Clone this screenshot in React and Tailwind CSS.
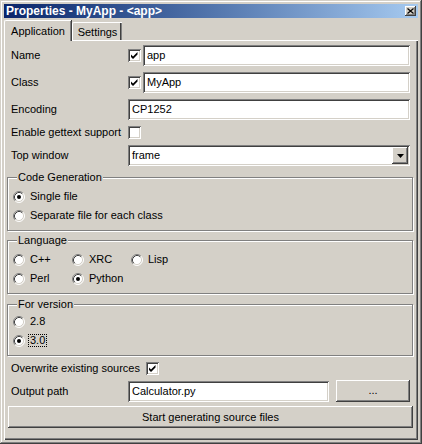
import React from "react";

const sunken =
  "shadow-[inset_1px_1px_#808080,inset_-1px_-1px_#ffffff,inset_2px_2px_#404040,inset_-2px_-2px_#d4d0c8]";
const raised =
  "shadow-[inset_-1px_-1px_#404040,inset_1px_1px_#ffffff,inset_-2px_-2px_#808080,inset_2px_2px_#d4d0c8]";
const etched = "border border-[#808080] shadow-[inset_1px_1px_#ffffff,1px_1px_#ffffff]";

function Check({ checked }) {
  return (
    <div className={`w-[13px] h-[13px] shrink-0 bg-white ${sunken}`}>
      {checked && (
        <svg width="13" height="13" viewBox="0 0 13 13" className="block">
          <path d="M3 5.5 L5 7.5 L9.5 3 L9.5 5.5 L5 10 L3 8 Z" fill="#000" />
        </svg>
      )}
    </div>
  );
}

function Radio({ checked }) {
  return (
    <svg width="12" height="12" viewBox="0 0 12 12" className="block shrink-0">
      <circle cx="6" cy="6" r="5" fill="#ffffff" />
      <path d="M2.11 9.89 A5.5 5.5 0 0 1 9.89 2.11" fill="none" stroke="#808080" strokeWidth="1" />
      <path d="M9.89 2.11 A5.5 5.5 0 0 1 2.11 9.89" fill="none" stroke="#ffffff" strokeWidth="1" />
      <path d="M2.82 9.18 A4.5 4.5 0 0 1 9.18 2.82" fill="none" stroke="#404040" strokeWidth="1" />
      <path d="M9.18 2.82 A4.5 4.5 0 0 1 2.82 9.18" fill="none" stroke="#d4d0c8" strokeWidth="1" />
      {checked && <circle cx="6" cy="6" r="2" fill="#000" />}
    </svg>
  );
}

function RadioItem({ checked, label, focus }) {
  return (
    <div className="flex items-center h-[19px]">
      <Radio checked={checked} />
      {focus ? (
        <span className="ml-[3px] px-px leading-[11px] border border-dotted border-black">{label}</span>
      ) : (
        <span className="ml-[5px]">{label}</span>
      )}
    </div>
  );
}

function Field({ children, className = "" }) {
  return (
    <div className={`h-[21px] bg-white flex items-center pl-[4px] ${sunken} ${className}`}>
      {children}
    </div>
  );
}

function Label({ children }) {
  return <div className="w-[121px] shrink-0 pl-[4px]">{children}</div>;
}

function Box({ title, className = "", children }) {
  return (
    <div className={`flex flex-col ${etched} ${className}`}>
      <div className="-mt-[7px] ml-[9px] px-px self-start bg-[#d4d0c8] leading-[13px]">{title}</div>
      {children}
    </div>
  );
}

export default function App() {
  return (
    <div className="w-[422px] h-[444px] bg-[#d4d0c8] p-[4px] flex flex-col text-black text-[11px] leading-[13px] font-['Liberation_Sans',Arial,sans-serif] shadow-[inset_-1px_-1px_#404040,inset_1px_1px_#d4d0c8,inset_-2px_-2px_#808080,inset_2px_2px_#ffffff]">
      {/* Title bar */}
      <div className="h-[14px] flex items-center justify-between pl-[2px] pr-[2px] bg-linear-to-r from-[#0a246a] to-[#a6caf0]">
        <span className="text-white font-bold text-[12px] leading-[14px]">Properties - MyApp - &lt;app&gt;</span>
        <div className={`w-[11px] h-[10px] bg-[#d4d0c8] flex items-center justify-center ${raised}`}>
          <svg width="7" height="6" viewBox="0 0 7 6" className="block">
            <path d="M0.5 0.5 L6.5 5.5 M6.5 0.5 L0.5 5.5" stroke="#000" strokeWidth="1.2" fill="none" />
          </svg>
        </div>
      </div>

      {/* Tabs */}
      <div className="mt-[2px] h-[20px] flex items-end">
        <div className="relative z-10 -mb-px h-[21px] w-[67px] flex items-center justify-center bg-[#d4d0c8] border-l border-t border-white rounded-tl-[2px] shadow-[inset_-1px_0_#808080,1px_0_#404040]">
          Application
        </div>
        <div className="h-[18px] w-[50px] ml-px flex items-center justify-center pt-[2px] border-l border-t border-white rounded-tl-[2px] shadow-[inset_-1px_0_#808080,inset_-2px_0_#404040]">
          Settings
        </div>
      </div>

      {/* Page */}
      <div className="flex-1 flex flex-col border-l border-t border-white pl-[2px] pr-[5px] pt-[4px] shadow-[inset_-1px_-1px_#404040,inset_-2px_-2px_#808080]">
        <div className="flex items-center h-[21px] mr-[3px]">
          <Label>Name</Label>
          <Check checked />
          <Field className="ml-[2px] flex-1">app</Field>
        </div>
        <div className="flex items-center h-[21px] mr-[3px] mt-[6px]">
          <Label>Class</Label>
          <Check checked />
          <Field className="ml-[2px] flex-1">MyApp</Field>
        </div>
        <div className="flex items-center h-[21px] mr-[3px] mt-[6px]">
          <Label>Encoding</Label>
          <Field className="flex-1">CP1252</Field>
        </div>
        <div className="flex items-center h-[21px] mr-[3px] mt-[2px]">
          <Label>Enable gettext support</Label>
          <Check />
        </div>
        <div className="flex items-center h-[21px] mr-[3px] mt-[2px]">
          <Label>Top window</Label>
          <div className={`flex-1 h-[21px] bg-white flex items-center justify-between pl-[4px] pr-[2px] ${sunken}`}>
            <span>frame</span>
            <div className={`w-[16px] h-[17px] bg-[#d4d0c8] flex items-center justify-center ${raised}`}>
              <svg width="7" height="4" viewBox="0 0 7 4" className="block">
                <path d="M0 0 H7 L3.5 4 Z" fill="#000" />
              </svg>
            </div>
          </div>
        </div>

        <Box title="Code Generation" className="mt-[11px] h-[54px]">
          <div className="pl-[5px] mt-[3px] flex flex-col">
            <RadioItem checked label="Single file" />
            <RadioItem label="Separate file for each class" />
          </div>
        </Box>

        <Box title="Language" className="mt-[9px] h-[54px]">
          <div className="pl-[5px] mt-[3px] grid grid-cols-[59px_59px_59px]">
            <RadioItem label="C++" />
            <RadioItem label="XRC" />
            <RadioItem label="Lisp" />
            <RadioItem label="Perl" />
            <RadioItem checked label="Python" />
          </div>
        </Box>

        <Box title="For version" className="mt-[10px] h-[52px]">
          <div className="pl-[5px] mt-[1px] flex flex-col">
            <RadioItem label="2.8" />
            <RadioItem checked focus label="3.0" />
          </div>
        </Box>

        <div className="flex items-center h-[21px] mt-[2px]">
          <div className="w-[139px] shrink-0 pl-[4px]">Overwrite existing sources</div>
          <Check checked />
        </div>

        <div className="flex items-center h-[22px] mt-[1px] mr-[3px]">
          <Label>Output path</Label>
          <Field className="w-[201px]">Calculator.py</Field>
          <div className={`ml-[7px] flex-1 h-[22px] bg-[#d4d0c8] flex items-center justify-center pb-[2px] ${raised}`}>
            ...
          </div>
        </div>

        <div className={`mt-[4px] ml-px h-[22px] bg-[#d4d0c8] flex items-center justify-center ${raised}`}>
          Start generating source files
        </div>
      </div>
    </div>
  );
}
